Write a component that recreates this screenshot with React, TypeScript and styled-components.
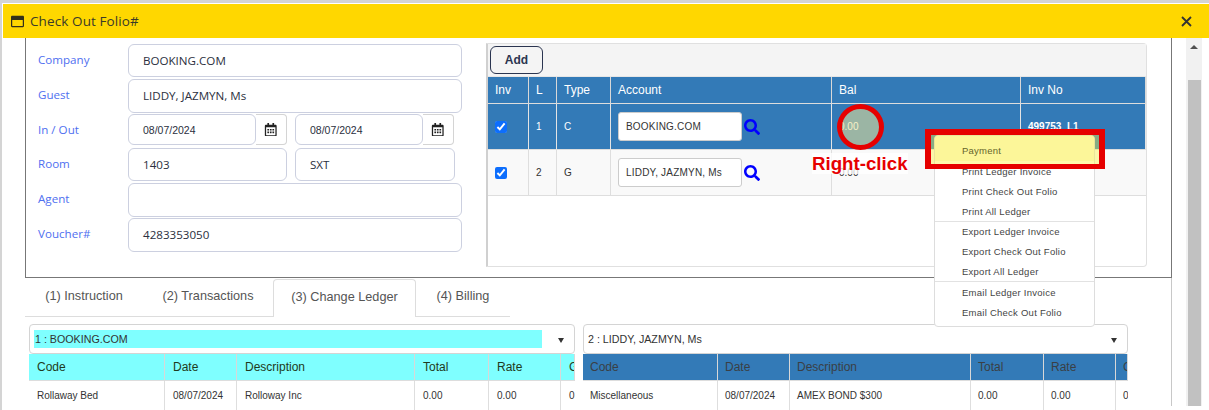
import React from "react";
import styled, { createGlobalStyle } from "styled-components";
import { FaRegWindowMaximize, FaSearch, FaRegCalendarAlt } from "react-icons/fa";

const Global = createGlobalStyle`
  html, body { margin: 0; padding: 0; background: #fff; }
  * { box-sizing: border-box; }
  body { font-family: "Liberation Sans", Arial, sans-serif; }
`;

const Page = styled.div`
  position: relative;
  width: 1209px;
  height: 410px;
  overflow: hidden;
  background: #fff;
  padding: 1px 0 0 3px;
  border-top: 3px solid #d4d4d4;
  &::before {
    content: "";
    position: absolute;
    left: 0;
    top: 0;
    bottom: 0;
    width: 2px;
    background: #d4d4d4;
  }
`;

const Header = styled.header`
  height: 34px;
  background: #ffd700;
  display: flex;
  align-items: center;
  padding: 0 17px 0 8px;
  gap: 6px;
  color: #3a3a2a;
  font-family: "Open Sans", sans-serif;
  font-size: 13.5px;
  svg { font-size: 13px; color: #33301a; }
`;

const Title = styled.span`
  flex: 1;
  letter-spacing: 0.1px;
`;

const Close = styled.svg`
  width: 11px;
  height: 11px;
  stroke: #333;
  stroke-width: 1.8;
  fill: none;
`;

const Body = styled.div`
  display: flex;
  height: 368px;
`;

const Content = styled.div`
  width: 1169px;
  border-right: 1px solid #c8c8c8;
  padding-left: 22px;
  height: 100%;
`;

const Scroll = styled.div`
  position: relative;
  width: 16px;
  margin-left: 14px;
  background: #f1f1f1;
  padding: 42px 2px 0;
  &::before {
    content: "";
    position: absolute;
    left: 4px;
    top: 7px;
    border: 4px solid transparent;
    border-top: 0;
    border-bottom: 4px solid #505050;
  }
`;

const Thumb = styled.div`
  width: 13px;
  height: 100%;
  background: #c1c1c1;
`;

const Panel = styled.section`
  width: 1147px;
  height: 240px;
  border: 1px solid #777;
  border-top: 0;
  display: flex;
`;

const Form = styled.div`
  width: 461px;
  padding: 6px 0 0 12px;
  display: grid;
  grid-template-columns: 90px 334px;
  grid-auto-rows: auto;
  align-content: start;
`;

const Label = styled.label<{ $h: number }>`
  height: ${(p) => p.$h}px;
  color: #4f6ff0;
  font-family: "Open Sans", sans-serif;
  font-size: 11.6px;
  display: flex;
  align-items: center;
  padding-bottom: 4px;
`;

const FieldRow = styled.div<{ $h: number }>`
  height: ${(p) => p.$h}px;
  display: flex;
  gap: 8px;
`;

const Input = styled.div<{ $w?: number; $h: number }>`
  width: ${(p) => (p.$w ? `${p.$w}px` : "100%")};
  height: ${(p) => p.$h}px;
  border: 1px solid #ccd0e0;
  border-radius: 6px;
  background: #fff;
  padding: 0 0 1px 14px;
  display: flex;
  align-items: center;
  color: #2b3040;
  font-family: "Open Sans", sans-serif;
  font-size: 11.6px;
`;

const DateGroup = styled.div`
  display: flex;
  width: 159px;
  height: 31px;
`;

const DateInput = styled.div`
  width: 128px;
  border: 1px solid #ccd0e0;
  border-radius: 6px;
  padding-left: 14px;
  display: flex;
  align-items: center;
  font-size: 10.5px;
  color: #2b3040;
`;

const CalBtn = styled.div`
  width: 31px;
  border: 1px solid #d4d4d4;
  border-left: 0;
  border-radius: 0 4px 4px 0;
  display: flex;
  align-items: center;
  justify-content: center;
  color: #222;
  font-size: 13.5px;
`;

const Ledger = styled.div`
  margin: 5px 0 0 -1px;
  width: 661px;
  height: 224px;
  border: 1px solid #e0e0e0;
  border-left: 2px solid #d0d0d0;
  border-radius: 0 4px 4px 0;
  display: flex;
  flex-direction: column;
`;

const LedgerBar = styled.div`
  height: 33px;
  background: #f4f4f4;
  padding: 2px;
  border-bottom: 1px solid #e6e6e6;
  flex: none;
`;

const AddBtn = styled.button`
  display: block;
  width: 53px;
  height: 28px;
  border: 1px solid #2b3550;
  border-radius: 6px;
  background: #f4f4f4;
  font-family: "Liberation Sans", sans-serif;
  font-weight: 700;
  font-size: 12px;
  color: #2b3550;
  padding: 0;
`;

const Table = styled.div<{ $cols: string }>`
  display: grid;
  grid-template-columns: ${(p) => p.$cols};
  width: 100%;
`;

const HeadCell = styled.div<{ $tone?: "blue" | "cyan" | "muted" }>`
  height: 27px;
  padding-left: ${(p) => (p.$tone === "cyan" ? 8 : 7)}px;
  display: flex;
  align-items: center;
  overflow: hidden;
  white-space: nowrap;
  font-size: 12px;
  background: ${(p) => (p.$tone === "cyan" ? "#7fffff" : "#337ab7")};
  color: ${(p) => (p.$tone === "cyan" ? "#1f3a20" : p.$tone === "muted" ? "#3a3f45" : "#fff")};
  border-right: 1px solid #d8d8d8;
  border-bottom: 1px solid #ddd;
  &:last-child { border-right: 0; }
`;

const Cell = styled.div<{ $sel?: boolean; $h?: number; $pad?: number }>`
  height: ${(p) => p.$h ?? 46}px;
  padding-left: ${(p) => p.$pad ?? 7}px;
  display: flex;
  align-items: center;
  overflow: hidden;
  white-space: nowrap;
  font-size: 10px;
  background: ${(p) => (p.$sel ? "#337ab7" : "#f9f9f9")};
  color: ${(p) => (p.$sel ? "#fff" : "#333")};
  border-right: 1px solid ${(p) => (p.$sel ? "#e4e4e4" : "#dedede")};
  border-bottom: 1px solid #dedede;
  &:last-child { border-right: 0; }
`;

const BodyCell = styled(Cell)`
  background: #fff;
  color: #333;
  font-size: 10px;
`;

const Check = styled.input.attrs({ type: "checkbox", readOnly: true })`
  width: 12px;
  height: 12px;
  margin: 0;
  accent-color: #0d6efd;
`;

const Account = styled.div`
  width: 124px;
  height: 29px;
  background: #fff;
  border: 1px solid #ccc;
  border-radius: 3px;
  color: #333;
  display: flex;
  align-items: center;
  padding-left: 7px;
  font-size: 10px;
  letter-spacing: 0.2px;
  margin-right: 2px;
  flex: none;
`;

const Lens = styled(FaSearch)`
  color: #0000ff;
  font-size: 16px;
  flex: none;
`;

const Tabs = styled.nav`
  display: flex;
  width: 485px;
  height: 38px;
  border-bottom: 1px solid #ddd;
  margin-top: 1px;
`;

const Tab = styled.div<{ $active?: boolean; $w: number }>`
  width: ${(p) => p.$w}px;
  height: ${(p) => (p.$active ? "38px" : "37px")};
  display: flex;
  align-items: center;
  justify-content: center;
  font-size: 12.7px;
  color: #555;
  background: #fff;
  border: ${(p) => (p.$active ? "1px solid #ddd" : "0")};
  border-bottom: 0;
  border-radius: 4px 4px 0 0;
  padding-bottom: 3px;
`;

const Ledgers = styled.div`
  display: flex;
  gap: 8px;
  margin: 7px 0 0 4px;
`;

const LedgerCol = styled.div<{ $w: number }>`
  width: ${(p) => p.$w}px;
`;

const Select = styled.div`
  position: relative;
  height: 30px;
  border: 1px solid #d4d4d4;
  border-radius: 4px;
  background: #fff;
  display: flex;
  align-items: center;
  padding-left: 4px;
  font-size: 10.7px;
  color: #333;
  &::after {
    content: "";
    position: absolute;
    right: 10px;
    top: 13px;
    border: 3.5px solid transparent;
    border-bottom: 0;
    border-top: 5px solid #333;
  }
`;

const CyanValue = styled.div`
  width: 508px;
  height: 18px;
  background: #7fffff;
  display: flex;
  align-items: center;
  padding-left: 1px;
`;

const Circle = styled.div`
  position: absolute;
  left: 837px;
  top: 101px;
  width: 47px;
  height: 46px;
  border-radius: 50%;
  border: 5px solid #e60000;
  background: rgba(240, 230, 150, 0.55);
`;

const Hint = styled.div`
  position: absolute;
  left: 812px;
  top: 150px;
  font-family: "Liberation Sans", sans-serif;
  font-weight: 700;
  font-size: 18.7px;
  line-height: 21px;
  color: #e60000;
  background: rgba(255, 255, 255, 0.75);
`;

const Menu = styled.ul`
  position: absolute;
  left: 934px;
  top: 132px;
  width: 161px;
  height: 192px;
  margin: 0;
  padding: 0;
  list-style: none;
  background: #fff;
  border: 1px solid #ddd;
  border-radius: 4px;
  font-size: 9.5px;
  letter-spacing: 0.25px;
  color: #444;
`;

const MenuItem = styled.li<{ $sep?: boolean }>`
  height: 20px;
  padding-left: 27px;
  display: flex;
  align-items: center;
  border-top: ${(p) => (p.$sep ? "1px solid #e2e2e2" : "0")};
  &:nth-last-child(2) {
    height: 21px;
    padding-top: 1px;
  }
`;

const PayItem = styled(MenuItem)`
  height: 25px;
  padding-top: 3px;
  background: #fafadc;
  border-radius: 4px 4px 0 0;
`;

const PayLabel = styled.span`
  position: relative;
  z-index: 2;
  color: #66652c;
`;

const Highlight = styled.div`
  position: absolute;
  left: 925px;
  top: 126px;
  width: 180px;
  height: 40px;
  border: solid #e60000;
  border-width: 6px 6px 5px;
  background: rgba(255, 240, 60, 0.42);
`;

const CloseIcon = () => (
  <Close viewBox="0 0 11 11"><path d="M1 1 L10 10 M10 1 L1 10" /></Close>
);

const LEDGER_COLS = "41px 28px 54px 221px 189px 1fr";
const LEFT_COLS = "136px 72px 178px 74px 72px 1fr";
const RIGHT_COLS = "135px 72px 181px 73px 72px 1fr";

const DateField = ({ value }: { value: string }) => (
  <DateGroup>
    <DateInput>{value}</DateInput>
    <CalBtn><FaRegCalendarAlt /></CalBtn>
  </DateGroup>
);

export default function App() {
  return (
    <Page>
      <Global />
      <Header>
        <FaRegWindowMaximize />
        <Title>Check Out Folio#</Title>
        <CloseIcon />
      </Header>
      <Body>
        <Content>
          <Panel>
            <Form>
              <Label $h={35}>Company</Label>
              <FieldRow $h={35}><Input $h={33}>BOOKING.COM</Input></FieldRow>
              <Label $h={35}>Guest</Label>
              <FieldRow $h={35}><Input $h={34}>LIDDY, JAZMYN, Ms</Input></FieldRow>
              <Label $h={34}>In / Out</Label>
              <FieldRow $h={34}>
                <DateField value="08/07/2024" />
                <DateField value="08/07/2024" />
              </FieldRow>
              <Label $h={35}>Room</Label>
              <FieldRow $h={35}>
                <Input $w={159} $h={33}>1403</Input>
                <Input $w={160} $h={33}>SXT</Input>
              </FieldRow>
              <Label $h={35}>Agent</Label>
              <FieldRow $h={35}><Input $h={34} /></FieldRow>
              <Label $h={35}>Voucher#</Label>
              <FieldRow $h={35}><Input $h={34}>4283353050</Input></FieldRow>
            </Form>
            <Ledger>
              <LedgerBar><AddBtn>Add</AddBtn></LedgerBar>
              <Table $cols={LEDGER_COLS}>
                {["Inv", "L", "Type", "Account", "Bal", "Inv No"].map((h) => (
                  <HeadCell key={h}>{h}</HeadCell>
                ))}
                <Cell $sel><Check defaultChecked /></Cell>
                <Cell $sel>1</Cell>
                <Cell $sel>C</Cell>
                <Cell $sel><Account>BOOKING.COM</Account><Lens /></Cell>
                <Cell $sel>0.00</Cell>
                <Cell $sel><b>499753_L1</b></Cell>
                <Cell><Check defaultChecked /></Cell>
                <Cell>2</Cell>
                <Cell>G</Cell>
                <Cell><Account>LIDDY, JAZMYN, Ms</Account><Lens /></Cell>
                <Cell>0.00</Cell>
                <Cell />
              </Table>
            </Ledger>
          </Panel>
          <Tabs>
            <Tab $w={118}>(1) Instruction</Tab>
            <Tab $w={130}>(2) Transactions</Tab>
            <Tab $w={143} $active>(3) Change Ledger</Tab>
            <Tab $w={94}>(4) Billing</Tab>
          </Tabs>
          <Ledgers>
            <LedgerCol $w={546}>
              <Select><CyanValue>1 : BOOKING.COM</CyanValue></Select>
              <Table $cols={LEFT_COLS}>
                {["Code", "Date", "Description", "Total", "Rate", "G"].map((h) => (
                  <HeadCell key={h} $tone="cyan">{h}</HeadCell>
                ))}
                <BodyCell $h={30} $pad={8}>Rollaway Bed</BodyCell>
                <BodyCell $h={30} $pad={8}>08/07/2024</BodyCell>
                <BodyCell $h={30} $pad={8}>Rolloway Inc</BodyCell>
                <BodyCell $h={30} $pad={8}>0.00</BodyCell>
                <BodyCell $h={30} $pad={8}>0.00</BodyCell>
                <BodyCell $h={30} $pad={8}>0</BodyCell>
              </Table>
            </LedgerCol>
            <LedgerCol $w={545}>
              <Select>2 : LIDDY, JAZMYN, Ms</Select>
              <Table $cols={RIGHT_COLS}>
                {["Code", "Date", "Description", "Total", "Rate", "G"].map((h) => (
                  <HeadCell key={h} $tone="muted">{h}</HeadCell>
                ))}
                <BodyCell $h={30}>Miscellaneous</BodyCell>
                <BodyCell $h={30}>08/07/2024</BodyCell>
                <BodyCell $h={30}>AMEX BOND $300</BodyCell>
                <BodyCell $h={30}>0.00</BodyCell>
                <BodyCell $h={30}>0.00</BodyCell>
                <BodyCell $h={30}>0</BodyCell>
              </Table>
            </LedgerCol>
          </Ledgers>
        </Content>
        <Scroll><Thumb /></Scroll>
      </Body>
      <Menu>
        <PayItem><PayLabel>Payment</PayLabel></PayItem>
        <MenuItem>Print Ledger Invoice</MenuItem>
        <MenuItem>Print Check Out Folio</MenuItem>
        <MenuItem>Print All Ledger</MenuItem>
        <MenuItem $sep>Export Ledger Invoice</MenuItem>
        <MenuItem>Export Check Out Folio</MenuItem>
        <MenuItem>Export All Ledger</MenuItem>
        <MenuItem $sep>Email Ledger Invoice</MenuItem>
        <MenuItem>Email Check Out Folio</MenuItem>
      </Menu>
      <Circle />
      <Hint>Right-click</Hint>
      <Highlight />
    </Page>
  );
}
